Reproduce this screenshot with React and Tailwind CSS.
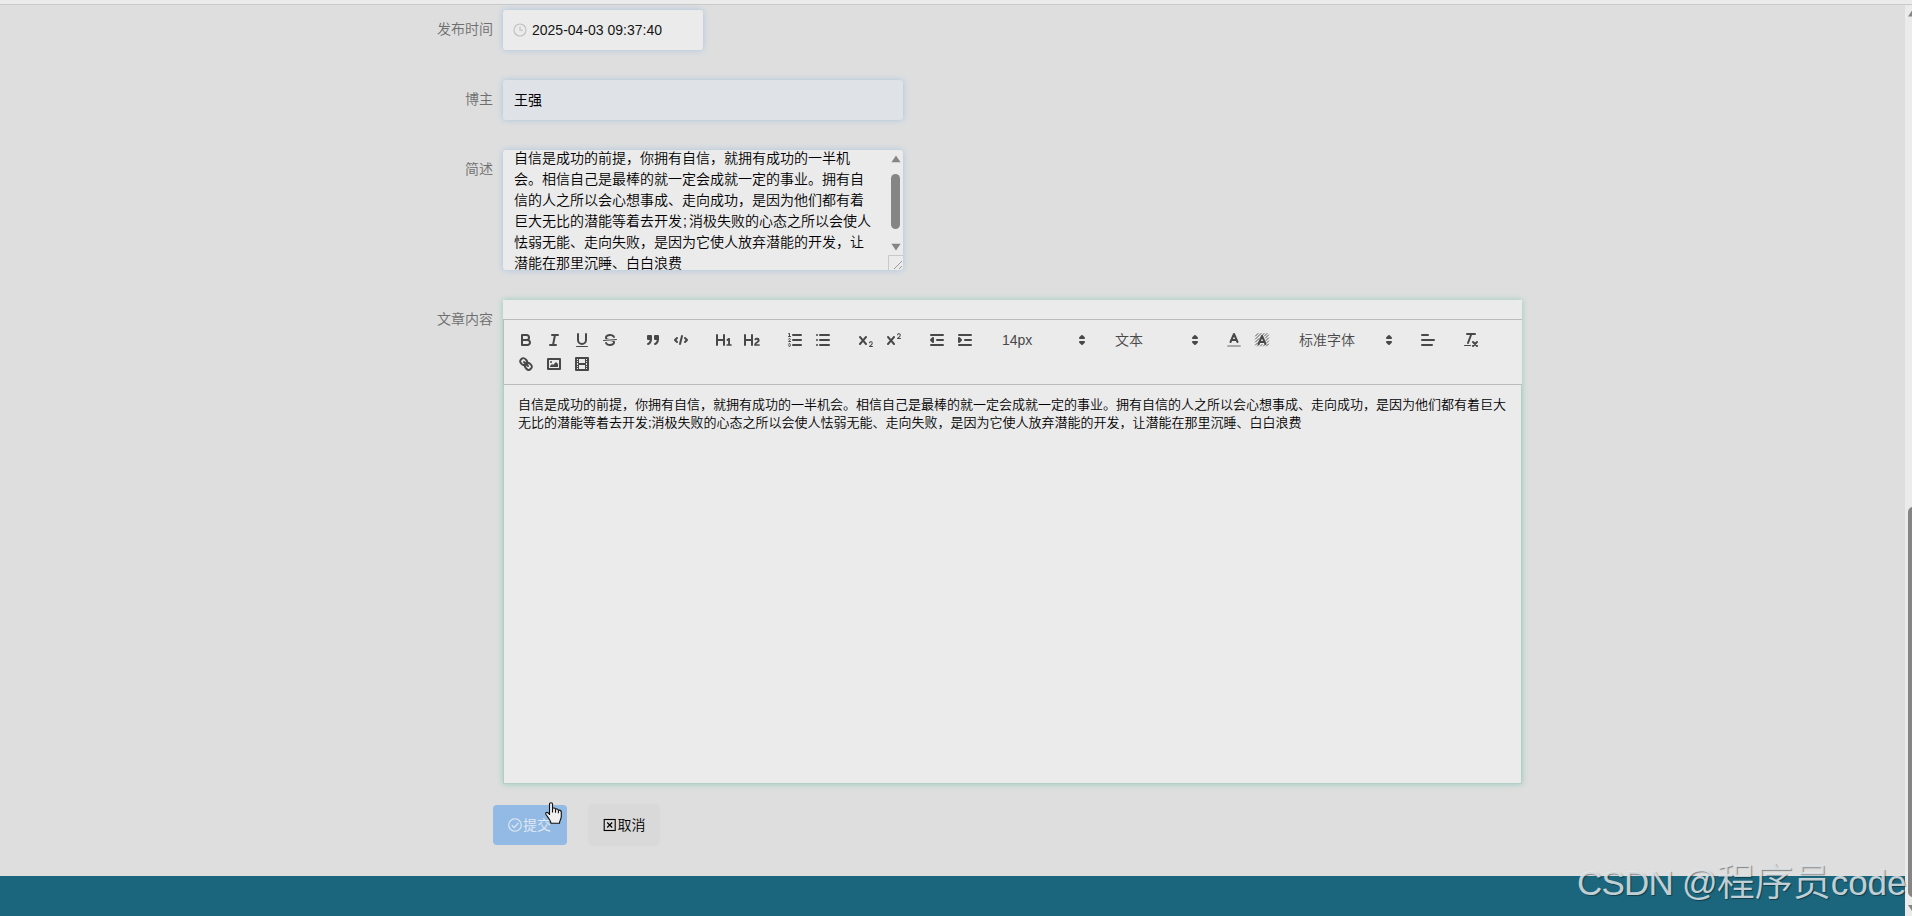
const SUMMARY_LINES = [
  '自信是成功的前提，你拥有自信，就拥有成功的一半机',
  '会。相信自己是最棒的就一定会成就一定的事业。拥有自',
  '信的人之所以会心想事成、走向成功，是因为他们都有着',
  '巨大无比的潜能等着去开发;消极失败的心态之所以会使人',
  '怯弱无能、走向失败，是因为它使人放弃潜能的开发，让',
  '潜能在那里沉睡、白白浪费',
]

const CONTENT_LINES = [
  '自信是成功的前提，你拥有自信，就拥有成功的一半机会。相信自己是最棒的就一定会成就一定的事业。拥有自信的人之所以会心想事成、走向成功，是因为他们都有着巨大',
  '无比的潜能等着去开发;消极失败的心态之所以会使人怯弱无能、走向失败，是因为它使人放弃潜能的开发，让潜能在那里沉睡、白白浪费',
]

const X_PATH =
  'M9.65,5.241a1,1,0,0,0-1.409.108L6,7.964,3.759,5.349A1,1,0,0,0,2.192,6.59178Q2.21541,6.6213,2.241,6.649L4.684,9.5,2.241,12.35A1,1,0,0,0,3.71,13.70722q0.02557-.02768.049-0.05722L6,11.036,8.241,13.65a1,1,0,1,0,1.567-1.24277Q9.78459,12.3777,9.759,12.35L7.316,9.5,9.759,6.651A1,1,0,0,0,9.65,5.241Z'

const FILL = { fill: 'currentColor', stroke: 'none' }

const icons = {
  bold: (
    <>
      <path d="M5,4H9.5A2.5,2.5,0,0,1,12,6.5v0A2.5,2.5,0,0,1,9.5,9H5Z" />
      <path d="M5,9h5.5A2.5,2.5,0,0,1,13,11.5v0A2.5,2.5,0,0,1,10.5,14H5Z" />
    </>
  ),
  italic: <path d="M7,4H13M5,14H11M8,14L10,4" />,
  underline: (
    <>
      <path d="M5,3V9a4.012,4.012,0,0,0,4,4H9a4.012,4.012,0,0,0,4-4V3" />
      <rect {...FILL} height="1" rx="0.5" width="12" x="3" y="15" />
    </>
  ),
  strike: (
    <>
      <path strokeWidth="1" d="M15.5,8.5L2.5,9.5" />
      <path {...FILL} d="M9.007,8C6.542,7.791,6,7.519,6,6.5,6,5.792,7.283,5,9,5c1.571,0,2.765.679,2.969,1.309a1,1,0,0,0,1.9-.617C13.356,4.106,11.354,3,9,3,6.2,3,4,4.538,4,6.5a3.2,3.2,0,0,0,.5,1.843Z" />
      <path {...FILL} d="M8.984,10C11.457,10.208,12,10.479,12,11.5c0,0.708-1.283,1.5-3,1.5-1.571,0-2.765-.679-2.969-1.309a1,1,0,1,0-1.9.617C4.644,13.894,6.646,15,9,15c2.8,0,5-1.538,5-3.5a3.2,3.2,0,0,0-.5-1.843Z" />
    </>
  ),
  quote: (
    <g fill="currentColor">
      <rect height="3" width="3" x="4" y="5" />
      <rect height="3" width="3" x="11" y="5" />
      <path d="M7,8c0,4.031-3,5-3,5M14,8c0,4.031-3,5-3,5" />
    </g>
  ),
  code: <path d="M5,7L3,9L5,11M13,7L15,9L13,11M10,5L8,13" />,
  h1: (
    <path {...FILL} d="M10,4V14a1,1,0,0,1-2,0V10H3v4a1,1,0,0,1-2,0V4A1,1,0,0,1,3,4V8H8V4a1,1,0,0,1,2,0Zm6.06787,9.209H14.98975V7.59863a.54085.54085,0,0,0-.605-.60547h-.62744a1.01119,1.01119,0,0,0-.748.29688L11.645,8.56641a.5435.5435,0,0,0-.022.8584l.28613.30762a.53861.53861,0,0,0,.84717.0332l.09912-.08789a1.2137,1.2137,0,0,0,.2417-.35254h.02246s-.01123.30859-.01123.60547V13.209H12.041a.54085.54085,0,0,0-.605.60547v.43945a.54085.54085,0,0,0,.605.60547h4.02686a.54085.54085,0,0,0,.605-.60547v-.43945A.54085.54085,0,0,0,16.06787,13.209Z" />
  ),
  h2: (
    <path {...FILL} d="M16.73975,13.81445v.43945a.54085.54085,0,0,1-.605.60547H11.855a.58392.58392,0,0,1-.64893-.60547V14.0127c0-2.90527,3.39941-3.42187,3.39941-4.55469a.77675.77675,0,0,0-.84717-.78125,1.17684,1.17684,0,0,0-.83594.38477c-.2749.26367-.561.374-.85791.13184l-.4292-.34082c-.30811-.24219-.38525-.51758-.1543-.81445a2.97155,2.97155,0,0,1,2.45361-1.17676,2.45393,2.45393,0,0,1,2.68408,2.40918c0,2.45312-3.1792,2.92676-3.27832,3.93848h2.79443A.54085.54085,0,0,1,16.73975,13.81445ZM9,3A.99974.99974,0,0,0,8,4V8H3V4A1,1,0,0,0,1,4V14a1,1,0,0,0,2,0V10H8v4a1,1,0,0,0,2,0V4A.99974.99974,0,0,0,9,3Z" />
  ),
  ordered: (
    <>
      <path d="M7,4H15M7,9H15M7,14H15" />
      <path strokeWidth="1" d="M2.5,5.5H4.5M4.5,10.5h-2c0-.234,1.85-1.076,1.85-2.234A0.959,0.959,0,0,0,2.5,8.156M2.5,14.846a0.959,0.959,0,0,0,1.85-.109A0.7,0.7,0,0,0,3.75,14a0.688,0.688,0,0,0,.6-0.736,0.959,0.959,0,0,0-1.85-.109" />
      <path {...FILL} d="M3.5,6A0.5,0.5,0,0,1,3,5.5V3.085l-0.276.138A0.5,0.5,0,0,1,2.053,3c-0.124-.247-0.023-0.324.224-0.447l1-.5A0.5,0.5,0,0,1,4,2.5v3A0.5,0.5,0,0,1,3.5,6Z" />
    </>
  ),
  bullet: <path d="M6,4H15M6,9H15M6,14H15M3,4V4M3,9V9M3,14V14" />,
  sub: (
    <>
      <path {...FILL} d="M15.5,15H13.861a3.858,3.858,0,0,0,1.914-2.975,1.8,1.8,0,0,0-1.6-1.751A1.921,1.921,0,0,0,12.021,11.7a0.50013,0.50013,0,1,0,.957.291h0a0.914,0.914,0,0,1,1.053-.725,0.81,0.81,0,0,1,.744.762c0,1.076-1.16971,1.86982-1.93971,2.43082A1.45639,1.45639,0,0,0,12,15.5a0.5,0.5,0,0,0,.5.5h3A0.5,0.5,0,0,0,15.5,15Z" />
      <path {...FILL} d={X_PATH} />
    </>
  ),
  sup: (
    <>
      <path {...FILL} d="M15.5,7H13.861a4.015,4.015,0,0,0,1.914-2.975,1.8,1.8,0,0,0-1.6-1.751A1.922,1.922,0,0,0,12.021,3.7a0.5,0.5,0,1,0,.957.291,0.917,0.917,0,0,1,1.053-.725,0.81,0.81,0,0,1,.744.762c0,1.077-1.164,1.925-1.934,2.486A1.423,1.423,0,0,0,12,7.5a0.5,0.5,0,0,0,.5.5h3A0.5,0.5,0,0,0,15.5,7Z" />
      <path {...FILL} d={X_PATH} />
    </>
  ),
  outdent: (
    <>
      <path d="M3,14H15M3,4H15M9,9H15" />
      <path fill="currentColor" d="M5,7V11L3,9Z" />
    </>
  ),
  indent: (
    <>
      <path d="M3,14H15M3,4H15M9,9H15" />
      <path fill="currentColor" d="M3,7V11L5,9Z" />
    </>
  ),
  color: (
    <>
      <path stroke="#a9a9a9" d="M3,15H15" />
      <path d="M5.5,11L9,3L12.5,11M11.63,9H6.38" />
    </>
  ),
  background: (
    <>
      <path strokeWidth="0.9" d="M2.5,5L5,2.5M2.5,8L8,2.5M2.5,11L6,7.5M9,4.5L11,2.5M2.5,14L4.5,12M11.5,5L14,2.5M4.5,15L6,13.5M12.5,7L15.5,4M7.5,15L9,13.5M13,9.5L15.5,7M10.5,15L12,13.5M14,11.5L15.5,10M13.5,15L15.5,13" />
      <path d="M5.5,13L9,5L12.5,13M11.63,11H6.38" />
    </>
  ),
  align: <path d="M3,9H15M3,14H13M3,4H9" />,
  clean: (
    <>
      <path d="M5,3H13M6,12L9.35,3M11,11L15,15M15,11L11,15" />
      <rect {...FILL} height="1" rx="0.5" width="7" x="2" y="14" />
    </>
  ),
  link: (
    <>
      <path d="M7,7L11,11" />
      <path d="M8.9,4.577a3.476,3.476,0,0,1,.36,4.679A3.476,3.476,0,0,1,4.577,8.9C3.185,7.5,2.035,6.4,4.217,4.217S7.5,3.185,8.9,4.577Z" />
      <path d="M13.423,9.1a3.476,3.476,0,0,0-4.679-.36,3.476,3.476,0,0,0,.36,4.679c1.392,1.392,2.5,2.542,4.679.36S14.815,10.5,13.423,9.1Z" />
    </>
  ),
  image: (
    <>
      <rect height="10" width="12" x="3" y="4" />
      <circle {...FILL} cx="6" cy="7" r="1" />
      <path {...FILL} d="M5,12V11L7,9L8,10L11,7L13,9V12Z" />
    </>
  ),
  video: (
    <>
      <rect height="12" width="12" x="3" y="3" />
      <path {...FILL} d="M5,3h1v12h-1zM12,3h1v12h-1zM5,8h8v2h-8zM3,5h3v1h-3zM3,7h3v1h-3zM3,10h3v1h-3zM3,12h3v1h-3zM12,5h3v1h-3zM12,7h3v1h-3zM12,10h3v1h-3zM12,12h3v1h-3z" />
    </>
  ),
  arrows: <path fill="currentColor" d="M7,11L9,13L11,11ZM7,7L9,5L11,7Z" />,
}

function Icon({ name }) {
  return (
    <svg viewBox="0 0 18 18" className="w-[18px] h-[18px]" fill="none" stroke="currentColor" strokeWidth="2" strokeLinecap="round" strokeLinejoin="round">
      {icons[name]}
    </svg>
  )
}

function Group({ names }) {
  return (
    <div className="flex mr-[15px]">
      {names.map((name) => (
        <button key={name} type="button" className="w-7 h-6 px-[5px] py-[3px]">
          <Icon name={name} />
        </button>
      ))}
    </div>
  )
}

function Picker({ label, className }) {
  return (
    <div className={`flex items-center justify-between h-6 mr-[15px] pl-2 pr-px text-sm ${className}`}>
      <span>{label}</span>
      <Icon name="arrows" />
    </div>
  )
}

function FormItem({ label, children }) {
  return (
    <div className="flex items-start mb-[30px]">
      <label className="w-[503px] shrink-0 pr-[10px] text-right text-sm leading-[39px] text-[#6d6e6f]">{label}</label>
      {children}
    </div>
  )
}

function Toolbar() {
  return (
    <div className="flex flex-wrap p-2 border border-[#b9bcbc] border-r-0 text-[#484848]">
      <Group names={['bold', 'italic', 'underline', 'strike']} />
      <Group names={['quote', 'code']} />
      <Group names={['h1', 'h2']} />
      <Group names={['ordered', 'bullet']} />
      <Group names={['sub', 'sup']} />
      <Group names={['outdent', 'indent']} />
      <Picker label="14px" className="w-[98px]" />
      <Picker label="文本" className="w-[98px]" />
      <Group names={['color', 'background']} />
      <Picker label="标准字体" className="w-[108px]" />
      <Group names={['align']} />
      <Group names={['clean']} />
      <Group names={['link', 'image', 'video']} />
    </div>
  )
}

export default function App() {
  return (
    <div className="relative flex flex-col h-[916px] overflow-hidden bg-[#dedede] font-[350] font-['Liberation_Sans','Noto_Sans_CJK_SC',sans-serif]">
      <div className="h-[5px] shrink-0 bg-[#ebebeb] border-b border-[#c9c9c9]" />
      <div className="flex flex-1 min-h-0">
        <main className="flex flex-col flex-1 min-w-0">
          <form className="flex-1 pt-[5px]">
            <FormItem label="发布时间">
              <div className="flex items-center w-[200px] h-10 pl-[10px] rounded-[3px] bg-[#ebebeb] shadow-[0_0_6px_#a9c6e0] text-sm text-[#151515]">
                <svg viewBox="0 0 14 14" className="w-[14px] h-[14px] mr-[5px]" fill="none" stroke="#bfc0c2" strokeWidth="1.1">
                  <circle cx="7" cy="7" r="6" />
                  <path d="M7 3.5V7.3H10" />
                </svg>
                2025-04-03 09:37:40
              </div>
            </FormItem>
            <FormItem label="博主">
              <div className="flex items-center w-[400px] h-10 px-[11px] rounded-[3px] bg-[#dfe2e6] shadow-[0_0_6px_#a9c6e0] text-sm text-black font-normal">王强</div>
            </FormItem>
            <FormItem label="简述">
              <div className="flex w-[400px] h-[120px] pl-[11px] rounded-[3px] bg-[#ebebeb] shadow-[0_0_6px_#a9c6e0] text-sm leading-[21px] text-black overflow-hidden">
                <div className="flex-1 -mt-[2px] whitespace-nowrap">
                  {SUMMARY_LINES.map((line) => {
                    const [head, tail] = line.split(';')
                    return (
                      <p key={line}>
                        {head}
                        {tail && <span className="pl-px pr-[2px]">;</span>}
                        {tail}
                      </p>
                    )
                  })}
                </div>
                <div className="flex flex-col items-center w-[15px]">
                  <svg viewBox="0 0 10 8" className="w-[10px] h-2 mt-[5px] fill-[#858585]"><path d="M5 0.5L9.6 7.2H0.4Z" /></svg>
                  <div className="w-[9px] h-[55px] mt-[11px] rounded-full bg-[#858585]" />
                  <svg viewBox="0 0 10 8" className="w-[10px] h-2 mt-[14px] fill-[#858585]"><path d="M5 7.5L9.6 0.8H0.4Z" /></svg>
                  <svg viewBox="0 0 15 15" className="w-[15px] h-[15px] mt-auto" fill="none" stroke="#999">
                    <path stroke="#c8c8c8" d="M0.5 15V0.5H15" />
                    <path d="M6 14L14 6M11 14L14 11" />
                  </svg>
                </div>
              </div>
            </FormItem>
            <FormItem label="文章内容">
              <div className="flex flex-col w-[1019px] h-[484px] bg-[#ebebeb] shadow-[0_0_6px_#96ccbe]">
                <div className="h-[19px] shrink-0" />
                <Toolbar />
                <div className="flex-1 pl-[14px] pt-[11px] text-[13px] leading-[18.46px] text-black whitespace-nowrap border-l border-r border-b border-[#b5cdc6]">
                  {CONTENT_LINES.map((line) => <p key={line}>{line}</p>)}
                </div>
              </div>
            </FormItem>
            <div className="flex -mt-[9px] pl-[493px] gap-[22px]">
              <button type="button" className="relative flex items-center justify-center w-[74px] h-10 pr-px rounded bg-[#93bae4] text-sm text-[#e3ebf3]">
                <svg viewBox="0 0 14 14" className="w-[14px] h-[14px] mr-px" fill="none" stroke="currentColor" strokeWidth="1.1">
                  <circle cx="7" cy="7" r="6.3" />
                  <path d="M3.7 7.2L6.2 9.6L10.4 4.8" />
                </svg>
                提交
                {/* hand pointer over the button */}
                <svg viewBox="0 0 17 22" className="absolute left-[52px] -top-[3px] w-[17px] h-[22px]" fill="#f0f0f0" stroke="#111" strokeWidth="1.1" strokeLinejoin="round">
                  <path d="M4.5 13V2C4.5 .4 7.5 .4 7.5 2V6.5C8 5.6 10.3 5.8 10.5 7.3C11.2 6.5 13.2 7 13.4 8.4C14.3 7.8 16.3 8.4 16.3 10V14.5C16.3 17 14.5 18.5 14.5 21.3H6C5.8 18.8 3.6 16.5 1 12.5C.2 11 1.5 9.7 2.9 10.7L4.5 12.3" />
                  <path d="M7.5 6.5V10.5M10.5 7.3V10.8M13.4 8.4V11.2" />
                </svg>
              </button>
              <button type="button" className="flex items-center justify-center w-[70px] h-10 rounded-sm bg-[#d9d9d9] shadow-[0_0_3px_#d4d4d4] text-sm text-black">
                <svg viewBox="0 0 14 14" className="w-[14px] h-[14px] mr-px" fill="none" stroke="currentColor" strokeWidth="1.1">
                  <rect x="1.2" y="1.5" width="11" height="11" />
                  <path strokeWidth="1.2" d="M4.2 4.5L9.2 9.5M9.2 4.5L4.2 9.5" />
                </svg>
                取消
              </button>
            </div>
          </form>
          <footer className="h-10 shrink-0 bg-[#1b667c]" />
        </main>
        <div className="flex flex-col w-[7px] pl-[3px] bg-[#ebebeb] overflow-hidden">
          <svg viewBox="0 0 10 8" className="w-[10px] h-2 mt-[4px] shrink-0 fill-[#858585]"><path d="M5 0L10 7.5H0Z" /></svg>
          <div className="w-[10px] h-[390px] mt-[490px] shrink-0 rounded-full bg-[#858585]" />
          <svg viewBox="0 0 10 8" className="w-[10px] h-2 mt-[8px] shrink-0 fill-[#858585]"><path d="M5 7.5L10 0H0Z" /></svg>
        </div>
      </div>
      {/* watermark */}
      <div className="absolute left-[1577px] top-[857px] flex items-baseline text-[35px] leading-[50px] text-[#e2e8ec]/85 whitespace-nowrap [text-shadow:1px_1px_1px_#00000066]">
        <span className="tracking-[-0.8px]">CSDN&nbsp;@</span>
        <span className="text-[38px]">程序员</span>
        <span>code</span>
      </div>
    </div>
  )
}
